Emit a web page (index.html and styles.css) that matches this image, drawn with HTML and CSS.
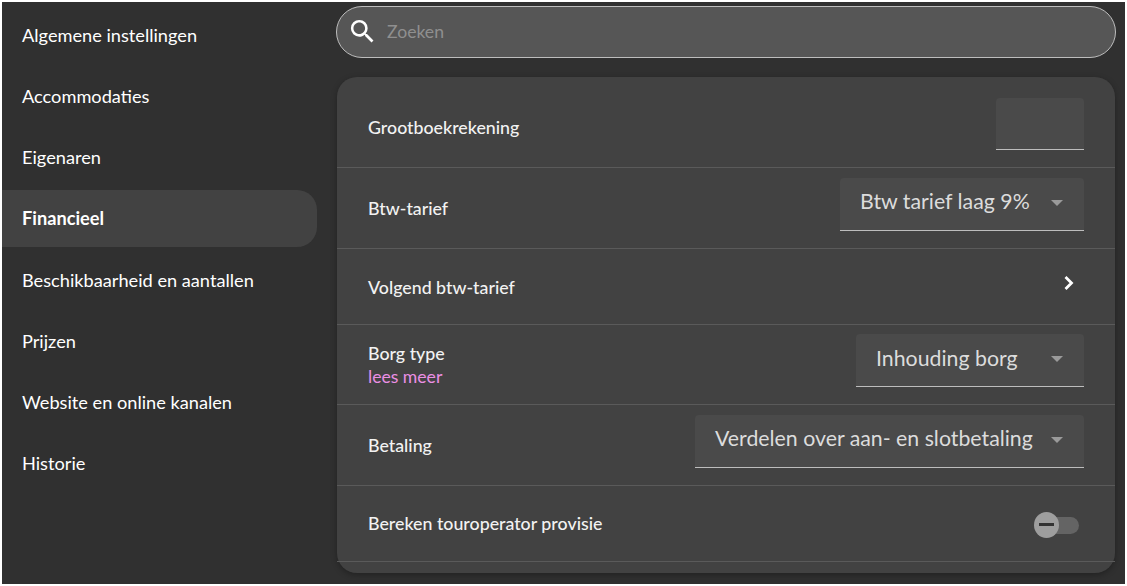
FILE: index.html
```html
<!DOCTYPE html>
<html lang="nl">
<head>
    <meta charset="UTF-8">
    <meta name="viewport" content="width=device-width, initial-scale=1.0">
    <title>Financieel</title>
    <link rel="stylesheet" href="styles.css">
</head>
<body>
    <div class="app">
        <nav class="sidebar">
            <a class="nav-item">Algemene instellingen</a>
            <a class="nav-item">Accommodaties</a>
            <a class="nav-item">Eigenaren</a>
            <a class="nav-item active">Financieel</a>
            <a class="nav-item">Beschikbaarheid en aantallen</a>
            <a class="nav-item">Prijzen</a>
            <a class="nav-item">Website en online kanalen</a>
            <a class="nav-item">Historie</a>
        </nav>
        <main class="content">
            <div class="search">
                <svg class="search-icon" width="31" height="31" viewBox="0 0 24 24">
                    <path fill="#fff" d="M15.5 14h-.79l-.28-.27A6.47 6.47 0 0 0 16 9.5 6.5 6.5 0 1 0 9.5 16c1.61 0 3.09-.59 4.23-1.57l.27.28v.79l5 4.99L20.49 19l-4.99-5zm-6 0C7.01 14 5 11.99 5 9.5S7.01 5 9.5 5 14 7.01 14 9.5 11.99 14 9.5 14z"/>
                </svg>
                <span class="placeholder">Zoeken</span>
            </div>
            <section class="card">
                <div class="row row-ledger">
                    <span class="label">Grootboekrekening</span>
                    <div class="field field-empty"></div>
                </div>
                <div class="row row-vat">
                    <span class="label">Btw-tarief</span>
                    <div class="field select select-vat">
                        <span>Btw tarief laag 9%</span>
                        <i class="caret"></i>
                    </div>
                </div>
                <div class="row row-next">
                    <span class="label">Volgend btw-tarief</span>
                    <svg class="chevron" width="16" height="18" viewBox="0 0 16 18">
                        <path fill="none" stroke="#fff" stroke-width="2.8" d="M3.5 3 9.5 9 3.5 15"/>
                    </svg>
                </div>
                <div class="row row-deposit">
                    <div class="label-stack">
                        <span class="label">Borg type</span>
                        <a class="more">lees meer</a>
                    </div>
                    <div class="field select select-deposit">
                        <span>Inhouding borg</span>
                        <i class="caret"></i>
                    </div>
                </div>
                <div class="row row-payment">
                    <span class="label">Betaling</span>
                    <div class="field select select-payment">
                        <span>Verdelen over aan- en slotbetaling</span>
                        <i class="caret"></i>
                    </div>
                </div>
                <div class="row row-commission">
                    <span class="label">Bereken touroperator provisie</span>
                    <div class="toggle">
                        <div class="toggle-track"></div>
                        <div class="toggle-thumb"><b></b></div>
                    </div>
                </div>
            </section>
        </main>
    </div>
</body>
</html>
```

FILE: styles.css
```css
* {
    box-sizing: border-box;
}

body {
    margin: 0;
    height: 586px;
    padding: 2px;
    background-color: #fff;
    font-family: "Lato", sans-serif;
    overflow: hidden;
}

.app {
    display: flex;
    height: 582px;
    background-color: #303030;
}

.sidebar {
    width: 315px;
    display: flex;
    flex-direction: column;
    gap: 4.25px;
    padding-top: 4px;
    flex-shrink: 0;
}

.nav-item {
    height: 57px;
    display: flex;
    align-items: center;
    padding-left: 20px;
    border-radius: 0 20px 20px 0;
    color: #fff;
    font-size: 18.2px;
}

.nav-item.active {
    background-color: #424242;
    font-weight: 700;
}

.content {
    flex: 1;
    padding: 4px 9px 0 19px;
}

.search {
    height: 52px;
    width: 780px;
    display: flex;
    align-items: center;
    gap: 9px;
    padding: 0 0 2px 10px;
    background-color: #565656;
    border: 1px solid #bdbdbd;
    border-radius: 26px;
}

.placeholder {
    color: #8f8f8f;
    font-size: 17.6px;
}

.card {
    margin-top: 19px;
    margin-left: 1px;
    width: 778px;
    height: 496px;
    background-color: #424242;
    border-radius: 20px;
    box-shadow: 0 2px 6px rgba(0, 0, 0, 0.3);
}

.row {
    display: flex;
    align-items: center;
    justify-content: space-between;
    padding: 0 31px;
    border-bottom: 1px solid #5a5a5a;
}

.row-ledger {
    height: 91px;
}

.row-vat {
    height: 81px;
}

.row-next {
    height: 76px;
}

.row-deposit {
    height: 80px;
}

.row-payment {
    height: 81px;
}

.row-commission {
    height: 76px;
}

.label {
    color: #f2f2f2;
    font-size: 17.8px;
    font-weight: 500;
}

.row-ledger .label {
    padding-top: 10px;
}

.row-commission .label {
    padding-bottom: 2px;
}

.label-stack {
    display: flex;
    flex-direction: column;
    gap: 2px;
}

.more {
    color: #ea8fe4;
    font-size: 17.6px;
}

.field {
    background-color: #4a4a4a;
    border-bottom: 1px solid #bdbdbd;
    border-radius: 4px 4px 0 0;
}

.field-empty {
    width: 88px;
    height: 52px;
    margin-top: 4px;
}

.select {
    height: 53px;
    margin-bottom: 8px;
    display: flex;
    align-items: center;
    justify-content: space-between;
    padding: 0 21px 5px 20px;
    color: #dcdcdc;
    font-size: 21.3px;
}

.select-vat {
    width: 244px;
}

.select-deposit {
    width: 228px;
}

.select-payment {
    width: 389px;
}

.caret {
    width: 0;
    height: 0;
    margin-top: 3px;
    border-left: 6px solid transparent;
    border-right: 6px solid transparent;
    border-top: 6px solid #9a9a9a;
}

.chevron {
    margin-right: 6px;
    margin-top: -8px;
}

.toggle {
    position: relative;
    width: 45px;
    height: 26px;
    margin-right: 5px;
    margin-top: 2px;
}

.toggle-track {
    position: absolute;
    right: 0;
    top: 5px;
    width: 33px;
    height: 17px;
    background-color: #646464;
    border-radius: 9px;
}

.toggle-thumb {
    position: absolute;
    left: 0;
    top: 0;
    width: 25px;
    height: 26px;
    display: flex;
    align-items: center;
    justify-content: center;
    background-color: #9e9e9e;
    border-radius: 50%;
}

.toggle-thumb b {
    width: 15px;
    height: 3px;
    background-color: #333;
}
```
